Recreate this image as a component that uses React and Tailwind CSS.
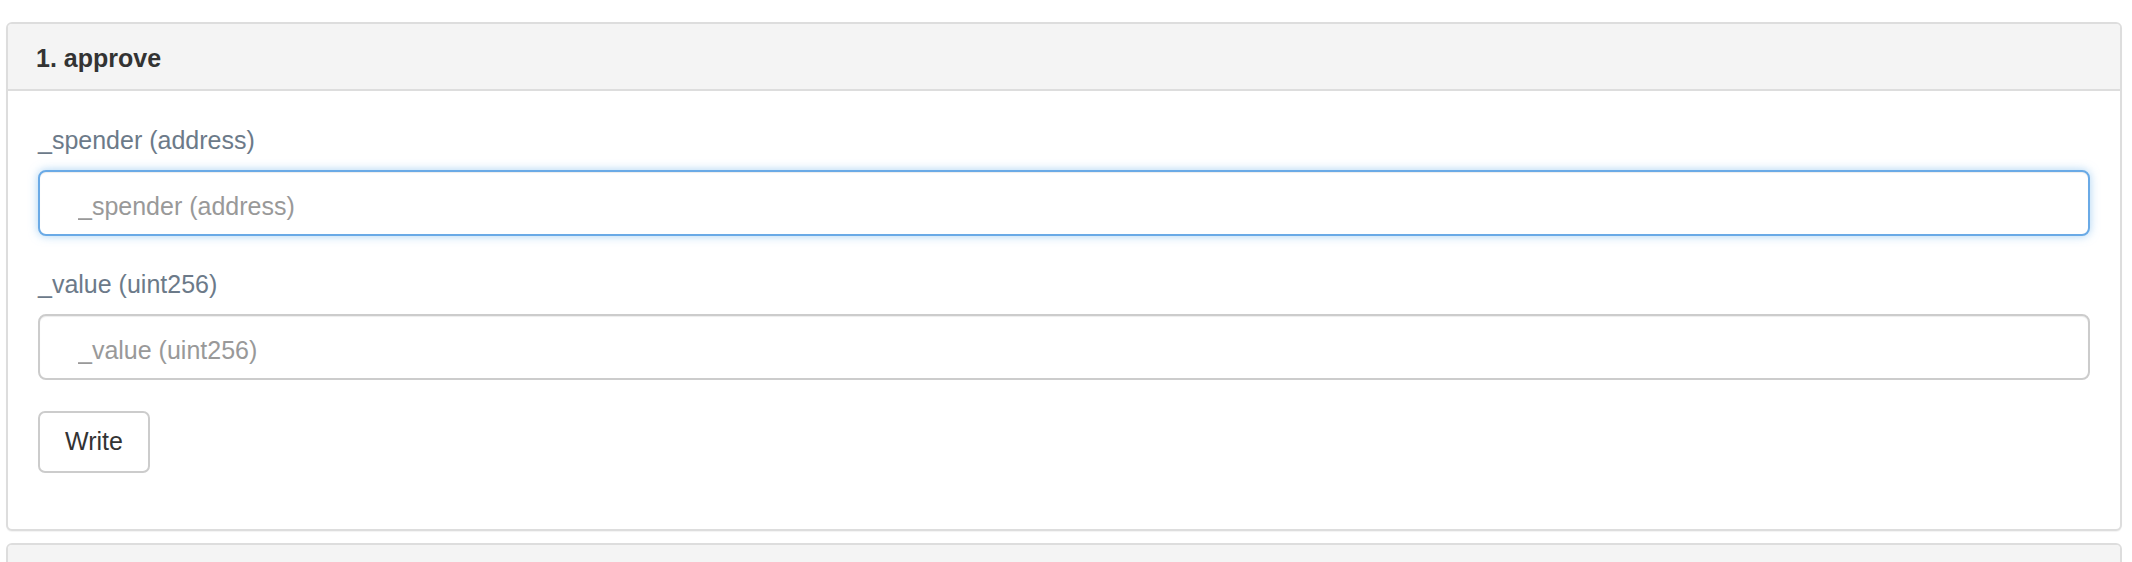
export default function App() {
  return (
    <div
      className="bg-white pt-[22px] pl-[6px] pr-[10px]"
      style={{ fontFamily: '"Liberation Sans", Arial, Helvetica, sans-serif' }}
    >
      <div className="rounded-[6px] border-2 border-[#dddddd] bg-white shadow-[0_1px_1px_rgba(0,0,0,0.05)]">
        <div className="flex h-[67px] items-center rounded-t-[4px] border-b-2 border-[#dddddd] bg-[#f4f4f4] px-[28px] pt-[5px] text-[25px] font-bold text-[#333333]">
          1. approve
        </div>
        <div className="px-[30px] pt-[31px] pb-[56px]">
          <div className="mb-[30px]">
            <label className="mb-[12px] block text-[25px] leading-[36px] text-[#6c7a89]">
              _spender (address)
            </label>
            <input
              type="text"
              placeholder="_spender (address)"
              className="block h-[66px] w-full rounded-[8px] border-2 border-[#6aaae6] bg-white pl-[38px] pr-[16px] pt-[7px] pb-0 text-[25px] text-[#555555] placeholder:text-[#999999] shadow-[inset_0_1px_1px_rgba(0,0,0,0.075),0_0_10px_rgba(102,175,233,0.55)] outline-none"
            />
          </div>
          <div className="mb-[31px]">
            <label className="mb-[12px] block text-[25px] leading-[36px] text-[#6c7a89]">
              _value (uint256)
            </label>
            <input
              type="text"
              placeholder="_value (uint256)"
              className="block h-[66px] w-full rounded-[8px] border-2 border-[#cccccc] bg-white pl-[38px] pr-[16px] pt-[7px] pb-0 text-[25px] text-[#555555] placeholder:text-[#999999] shadow-[inset_0_1px_1px_rgba(0,0,0,0.075)] outline-none"
            />
          </div>
          <button
            type="button"
            className="flex h-[62px] w-[112px] items-center justify-center rounded-[7px] border-2 border-[#cccccc] bg-white text-[25px] text-[#333333]"
          >
            Write
          </button>
        </div>
      </div>
      <div className="mt-[12px] rounded-[6px] border-2 border-[#dddddd] bg-white">
        <div className="h-[67px] rounded-t-[4px] border-b-2 border-[#dddddd] bg-[#f4f4f4]" />
        <div className="h-[100px]" />
      </div>
    </div>
  );
}
